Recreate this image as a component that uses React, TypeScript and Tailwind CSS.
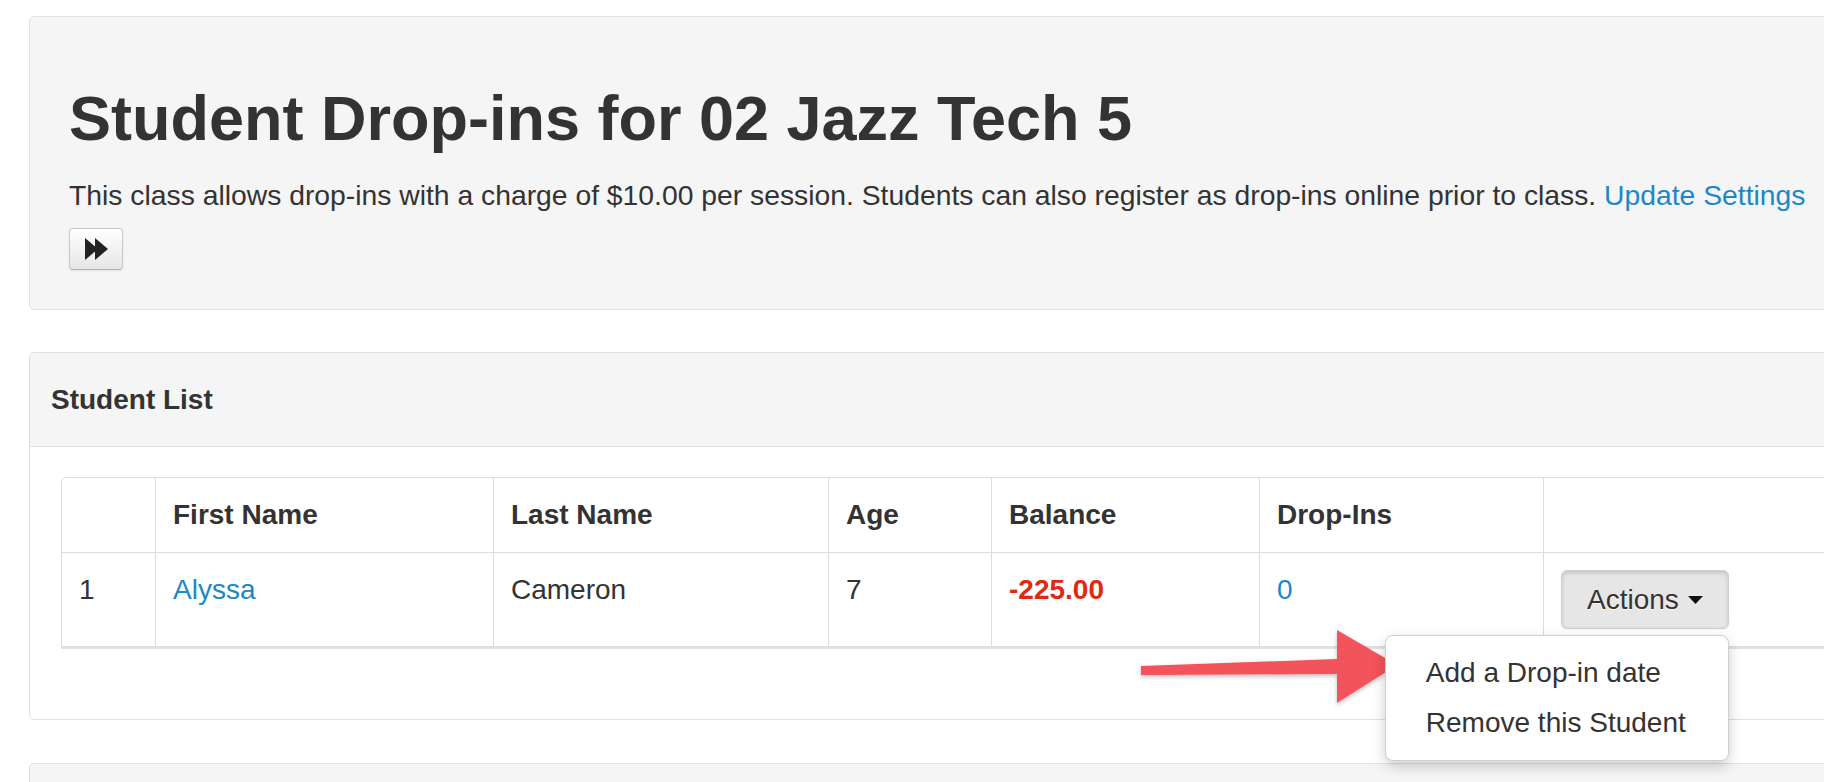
import React from "react";

function ForwardIcon() {
  return (
    <svg width="23" height="22" viewBox="0 0 23 22" aria-hidden="true">
      <polygon points="0,0 13,11 0,22" fill="#222" />
      <polygon points="10,0 23,11 10,22" fill="#222" />
    </svg>
  );
}

function Caret() {
  return (
    <svg width="15" height="8" viewBox="0 0 15 8" aria-hidden="true">
      <polygon points="0,0 15,0 7.5,8" fill="#111" />
    </svg>
  );
}

const headCell = "py-[17px] px-[17px] leading-[40px] font-bold";
const bodyCell = "py-[17px] px-[17px] leading-[40px]";

export default function App() {
  return (
    <div className="relative w-[1824px] h-[782px] overflow-hidden bg-white text-[#333] font-['Liberation_Sans',Arial,sans-serif]">
      <div className="pt-4 pl-[29px] flex flex-col">
        {/* page header well */}
        <div className="w-[1840px] bg-[#f5f5f5] border border-[#e3e3e3] rounded-[5px] px-[39px] pt-[67px] pb-[39px]">
          <h1 className="text-[63px] font-bold leading-[69px]">
            Student Drop-ins for 02 Jazz Tech 5
          </h1>
          <p className="mt-[22px] text-[28.3px] leading-[40px]">
            This class allows drop-ins with a charge of $10.00 per session. Students can also register as drop-ins online prior to class.{" "}
            <a className="text-[#1b88c8]">Update Settings</a>
          </p>
          <button className="mt-[13px] w-[54px] h-[42px] flex items-center justify-center rounded-[4px] border border-[#c8c8c8] border-b-[#b3b3b3] bg-gradient-to-b from-white to-[#e6e6e6] shadow-[0_1px_2px_rgba(0,0,0,0.08)]">
            <ForwardIcon />
          </button>
        </div>

        {/* student list panel */}
        <div className="mt-[42px] w-[1840px] border border-[#e0e0e0] rounded-[5px] bg-white">
          <div className="bg-[#f5f5f5] border-b border-[#e0e0e0] rounded-t-[5px] px-[21px] pt-[27px] pb-[26px]">
            <h2 className="text-[28px] leading-[40px] font-bold">Student List</h2>
          </div>
          <div className="px-[31px] pt-[30px] pb-[72px]">
            <div className="border border-[#dddddd] rounded-tl-[5px] shadow-[0_2px_0_#e2e2e2] text-[28px]">
              <div className="grid grid-cols-[93px_338px_335px_163px_268px_284px_1fr]">
                <div className={headCell}></div>
                <div className={`${headCell} border-l border-[#dddddd]`}>First Name</div>
                <div className={`${headCell} border-l border-[#dddddd]`}>Last Name</div>
                <div className={`${headCell} border-l border-[#dddddd]`}>Age</div>
                <div className={`${headCell} border-l border-[#dddddd]`}>Balance</div>
                <div className={`${headCell} border-l border-[#dddddd]`}>Drop-Ins</div>
                <div className={`${headCell} border-l border-[#dddddd]`}></div>
              </div>
              <div className="grid grid-cols-[93px_338px_335px_163px_268px_284px_1fr] border-t border-[#dddddd]">
                <div className={bodyCell}>1</div>
                <div className={`${bodyCell} border-l border-[#dddddd]`}>
                  <a className="text-[#1b88c8]">Alyssa</a>
                </div>
                <div className={`${bodyCell} border-l border-[#dddddd]`}>Cameron</div>
                <div className={`${bodyCell} border-l border-[#dddddd]`}>7</div>
                <div className={`${bodyCell} border-l border-[#dddddd] font-bold text-[#e2280f]`}>-225.00</div>
                <div className={`${bodyCell} border-l border-[#dddddd]`}>
                  <a className="text-[#1b88c8]">0</a>
                </div>
                <div className="py-[17px] px-[17px] border-l border-[#dddddd]">
                  <div className="relative inline-block">
                    <button className="h-[59px] px-[25px] flex items-center gap-[9px] rounded-[6px] bg-[#e6e6e6] border border-[#d0d0d0] shadow-[inset_0_2px_4px_rgba(0,0,0,0.15),0_1px_2px_rgba(0,0,0,0.05)] leading-[40px] text-[#333] [text-shadow:0_1px_1px_rgba(255,255,255,0.75)]">
                      Actions
                      <Caret />
                    </button>
                    <div className="absolute right-0 top-[65px] z-10 w-[344px] rounded-[8px] border border-[#cfcfcf] bg-white py-[12px] shadow-[0_5px_14px_rgba(0,0,0,0.2)]">
                      <div className="px-[40px] py-[5px] leading-[40px] whitespace-nowrap">Add a Drop-in date</div>
                      <div className="px-[40px] py-[5px] leading-[40px] whitespace-nowrap">Remove this Student</div>
                    </div>
                  </div>
                </div>
              </div>
            </div>
          </div>
        </div>

        {/* next panel, cut off at the bottom */}
        <div className="mt-[43px] w-[1840px] h-[80px] bg-[#f5f5f5] border border-[#e0e0e0] rounded-[5px]"></div>
      </div>

      {/* callout arrow */}
      <svg
        className="absolute left-0 top-0 pointer-events-none"
        width="1824"
        height="782"
        aria-hidden="true"
      >
        <defs>
          <filter id="arrowShadow" x="-10%" y="-30%" width="120%" height="160%">
            <feDropShadow dx="0" dy="2" stdDeviation="2" floodColor="#000" floodOpacity="0.25" />
          </filter>
        </defs>
        <polygon
          points="1141,666 1337,659 1337,630 1397,665 1337,703 1337,674 1141,675"
          fill="#f3525a"
          filter="url(#arrowShadow)"
        />
      </svg>
    </div>
  );
}
